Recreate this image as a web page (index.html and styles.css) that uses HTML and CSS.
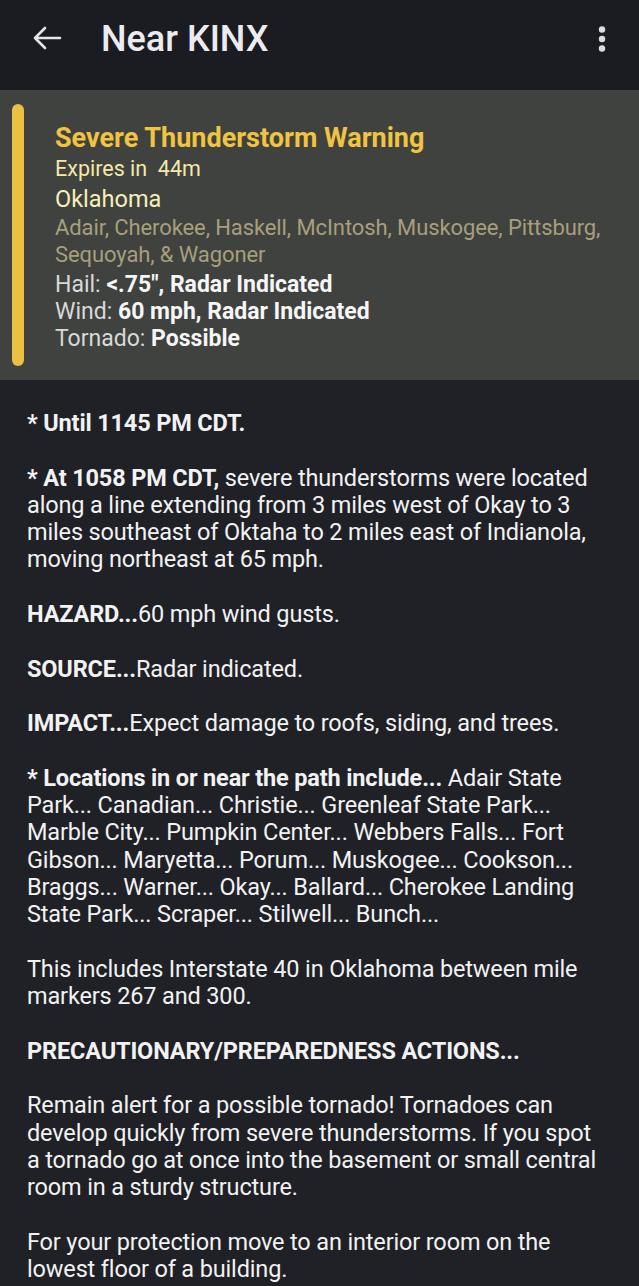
FILE: index.html
```html
<!DOCTYPE html>
<html>
<head>
<meta charset="utf-8">
<link rel="stylesheet" href="styles.css">
</head>
<body>
<header class="appbar">
  <svg class="back" width="30" height="24" viewBox="0 0 30 24"><path d="M28 12H3M13 2L3 12l10 10" fill="none" stroke="#e6e6ea" stroke-width="2.6" stroke-linecap="round" stroke-linejoin="round"/></svg>
  <h1 class="title">Near KINX</h1>
  <svg class="more" width="8" height="26" viewBox="0 0 8 26"><circle cx="4" cy="3.5" r="3.2" fill="#dcdce0"/><circle cx="4" cy="13" r="3.2" fill="#dcdce0"/><circle cx="4" cy="22.5" r="3.2" fill="#dcdce0"/></svg>
</header>
<section class="alert">
  <div class="bar"></div>
  <div class="info">
    <div class="a-title">Severe Thunderstorm Warning</div>
    <div class="a-exp">Expires in&nbsp; 44m</div>
    <div class="a-state">Oklahoma</div>
    <div class="a-counties">Adair, Cherokee, Haskell, McIntosh, Muskogee, Pittsburg, Sequoyah, &amp; Wagoner</div>
    <div class="a-row first">Hail: <b>&lt;.75", Radar Indicated</b></div>
    <div class="a-row">Wind: <b>60 mph, Radar Indicated</b></div>
    <div class="a-row">Tornado: <b>Possible</b></div>
  </div>
</section>
<main class="text">
  <p><b>* Until 1145 PM CDT.</b></p>
  <p><b>* At 1058 PM CDT,</b> severe thunderstorms were located along a line extending from 3 miles west of Okay to 3 miles southeast of Oktaha to 2 miles east of Indianola, moving northeast at 65 mph.</p>
  <p><b>HAZARD...</b>60 mph wind gusts.</p>
  <p><b>SOURCE...</b>Radar indicated.</p>
  <p><b>IMPACT...</b>Expect damage to roofs, siding, and trees.</p>
  <p><b>* Locations in or near the path include...</b> Adair State Park... Canadian... Christie... Greenleaf State Park... Marble City... Pumpkin Center... Webbers Falls... Fort Gibson... Maryetta... Porum... Muskogee... Cookson... Braggs... Warner... Okay... Ballard... Cherokee Landing State Park... Scraper... Stilwell... Bunch...</p>
  <p>This includes Interstate 40 in Oklahoma between mile markers 267 and 300.</p>
  <p><b>PRECAUTIONARY/PREPAREDNESS ACTIONS...</b></p>
  <p>Remain alert for a possible tornado! Tornadoes can develop quickly from severe thunderstorms. If you spot a&nbsp;tornado go at once into the basement or small central room in a sturdy structure.</p>
  <p>For your protection move to an interior room on the lowest floor of a building.</p>
</main>
</body>
</html>
```
FILE: styles.css
```css
html, body {
  margin: 0;
  padding: 0;
  background: #1f2126;
  font-family: Roboto, "Liberation Sans", sans-serif;
  color: #f2f2f2;
  overflow: hidden;
}
.appbar {
  height: 90px;
  background: #1a1c21;
  display: flex;
  align-items: flex-start;
  padding-top: 24px;
  box-sizing: border-box;
}
.back {
  margin-left: 32px;
  margin-top: 2px;
}
.title {
  margin: 0 0 0 39px;
  font-size: 36px;
  font-weight: 500;
  color: #ececf0;
  line-height: 30px;
  flex: 1;
  letter-spacing: 0;
}
.more {
  margin-right: 33px;
  margin-top: 2px;
}
.alert {
  background: #3f423f;
  display: flex;
  padding: 14px 16px 14px 12px;
  height: 290px;
  box-sizing: border-box;
}
.bar {
  width: 12px;
  border-radius: 6px;
  background: #ecc043;
  flex: none;
}
.info {
  margin-left: 31px;
  padding-top: 20px;
}
.a-title {
  font-size: 27px;
  font-weight: 700;
  color: #f0c440;
  line-height: 28px;
  letter-spacing: 0;
}
.a-exp {
  font-size: 21.5px;
  color: #f5e8a8;
  line-height: 30px;
  margin-top: 2px;
  letter-spacing: 0;
}
.a-state {
  font-size: 23.5px;
  color: #f8eeb8;
  line-height: 30px;
  letter-spacing: 0;
}
.a-counties {
  font-size: 22px;
  color: #a89f7c;
  line-height: 27px;
  letter-spacing: -0.1px;
}
.a-row {
  font-size: 23px;
  color: #d8d9d8;
  line-height: 27px;
  letter-spacing: 0;
}
.a-row.first {
  margin-top: 3px;
}
.a-row b {
  color: #f6f6f6;
  font-weight: 700;
}
.text {
  padding: 30px 31px 0 27px;
  font-size: 23.5px;
  line-height: 27.3px;
  letter-spacing: -0.15px;
}
.text p {
  margin: 0 0 27.3px 0;
}
.text b {
  font-weight: 700;
}
```
